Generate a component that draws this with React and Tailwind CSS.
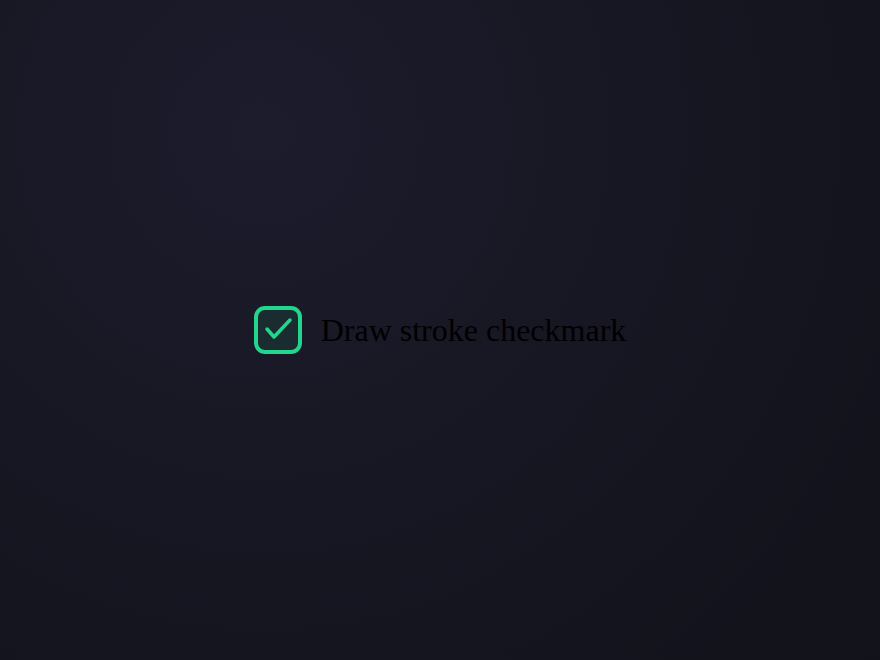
export default function App() {
  return (
    <div className="w-full h-[660px] flex items-center justify-center bg-[radial-gradient(circle_at_30%_20%,#1c1c2d_0%,#181825_35%,#12121a_100%)]">
      <label className="flex items-center gap-[19px] font-['Liberation_Serif',serif] text-[32px] text-black">
        <span className="relative w-12 h-12 box-border border-4 border-[#22d68e] rounded-[11px] bg-[#1b2c31] shrink-0">
          <svg width="48" height="48" viewBox="0 0 48 48" className="absolute -left-1 -top-1">
            <polyline points="13,23 20,31 36,14" fill="none" stroke="#22d68e" strokeWidth="3.5" strokeLinecap="round" strokeLinejoin="round" />
          </svg>
        </span>
        <span>Draw stroke checkmark</span>
      </label>
    </div>
  );
}
